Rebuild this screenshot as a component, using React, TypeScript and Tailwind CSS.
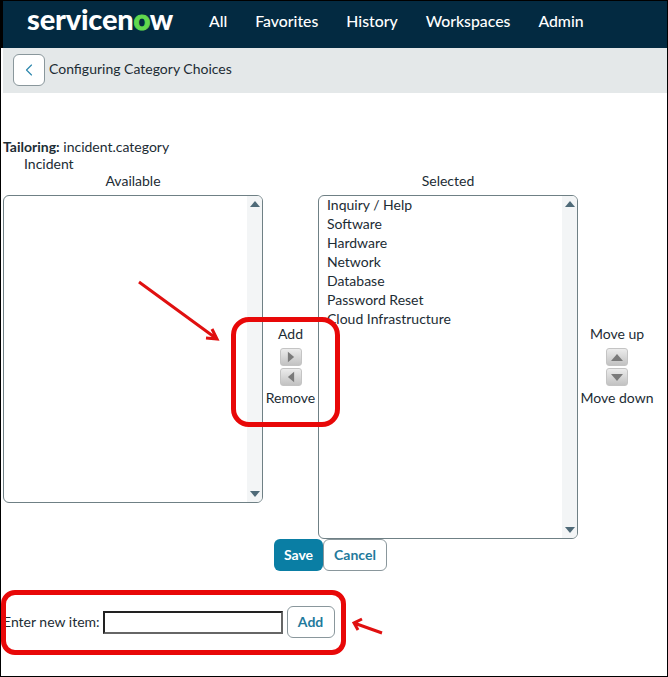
import { ChevronLeft } from 'lucide-react';

const navItems = ['All', 'Favorites', 'History', 'Workspaces', 'Admin'];
const selected = ['Inquiry / Help', 'Software', 'Hardware', 'Network', 'Database', 'Password Reset', 'Cloud Infrastructure'];

function Triangle({ dir, className }: { dir: 'up' | 'down' | 'left' | 'right'; className: string }) {
    const points = {
        up: '0,8 6,1 12,8',
        down: '0,1 6,8 12,1',
        left: '8,0 1,6 8,12',
        right: '1,0 8,6 1,12',
    }[dir];
    const box = dir === 'up' || dir === 'down' ? '0 0 12 9' : '0 0 9 12';
    return (
        <svg viewBox={box} className={className}>
            <polygon points={points} fill="currentColor" />
        </svg>
    );
}

function ArrowButton({ dir }: { dir: 'up' | 'down' | 'left' | 'right' }) {
    const size = dir === 'up' || dir === 'down' ? 'w-[12px] h-[9px]' : 'w-[8px] h-[12px]';
    return (
        <div className="w-[22px] h-[18px] rounded-[3px] border border-[#c4c4c4] bg-gradient-to-b from-[#ececec] to-[#c2c2c2] flex items-center justify-center text-[#7a7a7a]">
            <Triangle dir={dir} className={size} />
        </div>
    );
}

function ListBox({ items, height }: { items: string[]; height: string }) {
    return (
        <div className={`w-[260px] ${height} border border-[#6f8085] rounded-[6px] flex overflow-hidden bg-white`}>
            <ul className="flex-1 pl-[8px] -mt-[1px] text-[14px] leading-[19px] text-[#1c2c34]">
                {items.map((item) => (
                    <li key={item}>{item}</li>
                ))}
            </ul>
            <div className="w-[15px] bg-[#f3f5f6] flex flex-col justify-between items-center py-[4px] text-[#4f6a78]">
                <Triangle dir="up" className="w-[10px] h-[8px]" />
                <Triangle dir="down" className="w-[10px] h-[8px]" />
            </div>
        </div>
    );
}

function ColumnLabel({ children }: { children: string }) {
    return <div className="w-[260px] h-[24px] text-center text-[14px] leading-[19px] text-[#1c2c34]">{children}</div>;
}

export default function App() {
    return (
        <div className="relative w-[668px] h-[677px] bg-white overflow-hidden border border-black font-['Lato',sans-serif]">
            <header className="h-[47px] bg-[#032a41] border-l-2 border-black flex items-center pb-[8px] text-white">
                <div className="ml-[24px] w-[161px] text-[29px] font-black leading-none tracking-[-0.2px] pb-[4px]">
                    service<span>n</span><span className="text-[#62d84e] [-webkit-text-stroke:1px_#62d84e]">o</span><span>w</span>
                </div>
                <nav className="flex gap-[28px] ml-[21px] text-[15.8px] font-medium">
                    {navItems.map((item) => (
                        <span key={item}>{item}</span>
                    ))}
                </nav>
            </header>

            <div className="h-[45px] ml-[2px] bg-[#e4e8e9] flex items-center pl-[10px] gap-[4px]">
                <button className="w-[32px] h-[32px] mb-[2px] bg-white border border-[#8a979c] rounded-[6px] flex items-center justify-center text-[#2d87ad]">
                    <ChevronLeft size={20} strokeWidth={1.4} />
                </button>
                <span className="text-[14px] mb-[5px] text-[#1c2c34]">Configuring Category Choices</span>
            </div>

            <main className="pl-[2px] pt-[44px] text-[14px] text-[#1c2c34]">
                <div className="h-[19px] leading-[19px]">
                    <b className="font-bold">Tailoring:</b> incident.category
                </div>
                <div className="h-[15px] leading-[15px] pl-[21px]">Incident</div>

                <div className="flex items-start">
                    <div>
                        <ColumnLabel>Available</ColumnLabel>
                        <ListBox items={[]} height="h-[308px]" />
                    </div>
                    <div className="w-[55px] pt-[153px] flex flex-col items-center">
                        <span className="leading-[19px] h-[19px] mb-[5px]">Add</span>
                        <ArrowButton dir="right" />
                        <div className="h-[2px]" />
                        <ArrowButton dir="left" />
                        <span className="leading-[19px] h-[19px] mt-[2px]">Remove</span>
                    </div>
                    <div>
                        <ColumnLabel>Selected</ColumnLabel>
                        <ListBox items={selected} height="h-[344px]" />
                    </div>
                    <div className="w-[78px] pt-[153px] flex flex-col items-center">
                        <span className="leading-[19px] h-[19px] mb-[5px]">Move up</span>
                        <ArrowButton dir="up" />
                        <div className="h-[2px]" />
                        <ArrowButton dir="down" />
                        <span className="leading-[19px] h-[19px] mt-[2px] whitespace-nowrap">Move down</span>
                    </div>
                </div>

                <div className="flex pl-[271px]">
                    <button className="w-[49px] h-[32px] pb-[2px] bg-[#0a7ea4] rounded-[6px] text-white font-bold text-[14px]">Save</button>
                    <button className="w-[64px] h-[32px] pb-[2px] bg-white border border-[#8a979c] rounded-[6px] text-[#1f7a9c] font-bold text-[14px]">Cancel</button>
                </div>

                <div className="flex items-center mt-[35px]">
                    <span className="mb-[2px]">Enter new item:</span>
                    <div className="ml-[3px] w-[180px] h-[23px] border-2 border-t-[#222] border-l-[#222] border-r-[#666] border-b-[#666] bg-white" />
                    <button className="ml-[4px] w-[48px] h-[32px] pb-[2px] bg-white border border-[#8a979c] rounded-[6px] text-[#1f7a9c] font-bold text-[14px]">Add</button>
                </div>
            </main>

            {/* red callouts */}
            <div className="absolute left-[230px] top-[316px] w-[109px] h-[110px] border-[5px] border-[#e80808] rounded-[18px]" />
            <div className="absolute left-0 top-[589px] w-[345px] h-[65px] border-[5px] border-[#e80808] rounded-[14px]" />
            <svg className="absolute left-0 top-0 w-[668px] h-[677px] pointer-events-none" viewBox="0 0 668 677" fill="none" stroke="#e01010" strokeWidth="3">
                <path d="M138 281 L216 338 M205 337 L216 338 L211 328" />
                <path d="M381 632 L353 622 M361 618 L353 622 L357 629" />
            </svg>
        </div>
    );
}
